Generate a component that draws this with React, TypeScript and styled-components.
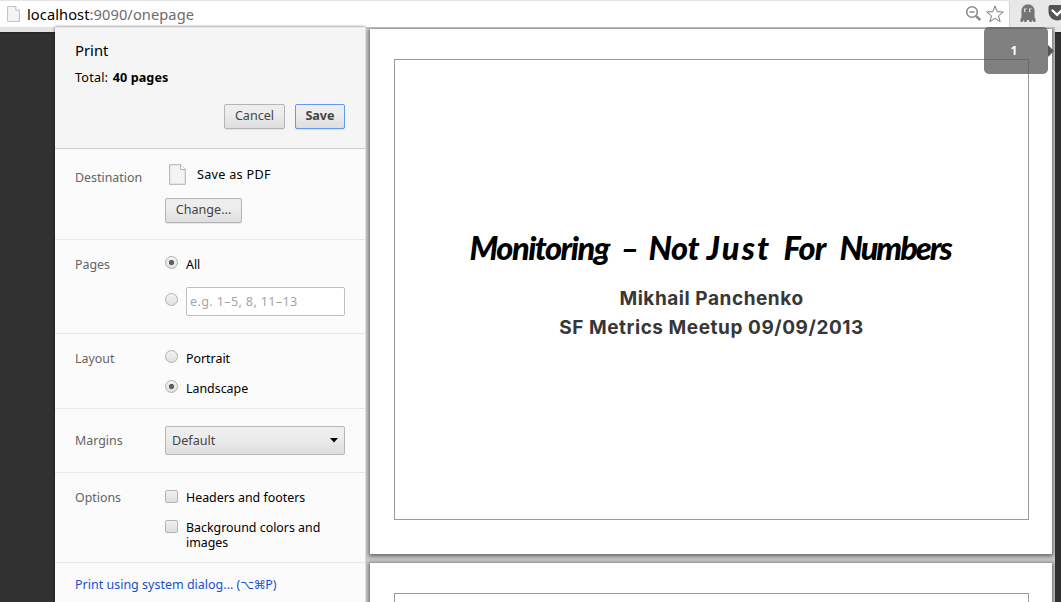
import React from "react";
import styled, { createGlobalStyle } from "styled-components";

const Global = createGlobalStyle`
  * { box-sizing: border-box; }
  body { margin: 0; overflow: hidden; background: #333; font-family: "Noto Sans", "Open Sans", sans-serif; font-size: 13px; color: #000; }
`;

const Screen = styled.div`
  width: 1061px; height: 602px; overflow: hidden; display: flex; flex-direction: column; background: #313131;
`;
const Toolbar = styled.header`
  height: 27px; flex: none; display: flex; background: #e8e8e8;
`;
const AddressBar = styled.div`
  width: 1010px; height: 27px; display: flex; align-items: center; background: #fff;
  border-top: 1px solid #e3e3e3; border-right: 1px solid #d4d4d4; border-radius: 0 2px 2px 0; padding: 0 5px 1px 7px;
`;
const Url = styled.div`
  flex: 1; margin-left: 7px; font-size: 14.6px; line-height: 22px; color: #6c6c6c; letter-spacing: 0.1px;
  span { color: #000; }
`;
const StarSlot = styled.span`display: flex; margin-left: 4px;`;
const Extensions = styled.div`
  flex: 1; display: flex; align-items: center; gap: 12px; padding: 0 0 1px 10px; overflow: hidden;
  svg { flex: none; }
`;
const Body = styled.main`
  flex: 1; display: flex; min-height: 0; position: relative;
`;
const Backdrop = styled.div<{ $w: number }>`
  width: ${p => p.$w}px; flex: none; border-top: 5px solid #e4e4e4; background: #313131;
  box-shadow: inset 0 2px 2px -1px #222;
`;
const Sidebar = styled.aside`
  width: 310px; flex: none; background: #fbfbfb; display: flex; flex-direction: column;
  box-shadow: 0 0 3px rgba(0,0,0,.6);
`;
const Summary = styled.div`
  height: 122px; flex: none; padding: 12px 20px 0; background: #f5f5f5; border-top: 1px solid #e6e6e6; border-bottom: 1px solid #cfcfcf;
`;
const Heading = styled.h1`
  margin: 0; font-size: 14.8px; font-weight: 400; line-height: 20px;
`;
const Total = styled.div`
  margin-top: 9px; font-size: 12.6px; line-height: 18px; letter-spacing: 0.2px;
  b { font-weight: 700; font-size: 12.6px; letter-spacing: 0.1px; margin-left: 1px; }
`;
const Actions = styled.div`
  display: flex; justify-content: flex-end; gap: 10px; margin-top: 17px;
`;
const Button = styled.button<{ $w: number; $primary?: boolean }>`
  width: ${p => p.$w}px; height: 25px; padding: 0 0 3px; font-family: inherit; font-size: 12.6px;
  font-weight: ${p => (p.$primary ? 700 : 400)}; color: #444;
  border: 1px solid ${p => (p.$primary ? "#5e97f5" : "#b4b4b4")}; border-radius: 2px;
  background: linear-gradient(#eeeeee, #ededed 38%, #dedede);
  box-shadow: 0 1px 0 rgba(0,0,0,.07);
`;
const Row = styled.section<{ $h: number; $top: number }>`
  height: ${p => p.$h}px; flex: none; display: flex; padding: ${p => p.$top}px 20px 0; border-bottom: 1px solid #e8e8e8;
`;
const Label = styled.div<{ $top?: number }>`
  width: 90px; flex: none; padding-top: ${p => p.$top ?? 0}px; line-height: 16px; font-size: 12.4px; color: #646464;
`;
const Controls = styled.div<{ $gap: number }>`
  flex: 1; display: flex; flex-direction: column; gap: ${p => p.$gap}px;
`;
const Destination = styled.div`
  display: flex; align-items: flex-start; height: 22px; padding-left: 4px; line-height: 21px; font-size: 12.6px; letter-spacing: 0.3px;
  span { margin-left: 11px; }
`;
const Choice = styled.label`
  display: flex; align-items: flex-start; line-height: 15px; font-size: 12.4px; gap: 8px;
`;
const Radio = styled.i<{ $on?: boolean }>`
  width: 13px; height: 13px; flex: none; margin-top: -1px; border: 1px solid #b2b2b2; border-radius: 50%;
  background: ${p => (p.$on ? "radial-gradient(circle, #606060 0 2.3px, transparent 3px)," : "")} linear-gradient(#f2f2f2, #e0e0e0);
`;
const Check = styled.i`
  width: 13px; height: 13px; flex: none; border: 1px solid #b4b4b4; border-radius: 2px;
  background: linear-gradient(#f0f0f0, #dedede);
`;
const RangeRow = styled.div`display: flex; gap: 8px; align-items: flex-start;`;
const RangeRadio = styled(Radio)`margin-top: 6px;`;
const RangeInput = styled.input`
  width: 159px; height: 29px; border: 1px solid #bfbfbf; border-radius: 2px; background: #fff; padding: 0 3px; font: 12.6px "Noto Sans", sans-serif;
  letter-spacing: 0.36px;
  &::placeholder { color: #a5a5a5; opacity: 1; }
`;
const Select = styled.div`
  width: 180px; height: 29px; display: flex; align-items: center; justify-content: space-between; padding: 0 6px;
  border: 1px solid #b8b8b8; border-radius: 2px; background: linear-gradient(#eeeeee, #ededed 38%, #dedede);
  font-size: 12.6px; color: #444;
`;
const SystemLink = styled.a`
  padding: 13px 20px; line-height: 18px; font-size: 12.5px; color: #1551cc; white-space: nowrap;
  span { font-family: "DejaVu Sans", sans-serif; font-size: 12px; letter-spacing: -0.5px; }
`;
const Preview = styled.div`
  width: 690px; flex: none; overflow: hidden; padding: 1px 3px 0 4px; display: flex; flex-direction: column; gap: 9px;
  background: #c9c9c9; border-top: 1px solid #bcbcbc; border-left: 1px solid #ddd;
`;
const Sheet = styled.article`
  width: 682px; height: 525px; flex: none; padding: 30px 24px 34px; background: #fff; box-shadow: 0 1px 4px 1px rgba(0,0,0,.52);
`;
const Slide = styled.div`
  width: 635px; height: 461px; border: 1px solid #9b9b9b; display: flex; flex-direction: column; align-items: center; padding-top: 163px;
`;
const Title = styled.h2`
  margin: 0; height: 48px; display: flex; color: #000; font: italic 900 32.5px/50px Lato, sans-serif;
`;
const Word = styled.span<{ $w: number; $sp: number }>`
  width: ${p => p.$w}px; letter-spacing: ${p => p.$sp}px; white-space: nowrap;
`;
const Author = styled.p`
  margin: 13px 0 0; font: 700 19px/29px Inter, sans-serif; color: #373737; text-align: center; letter-spacing: 0.55px;
`;
const PageBadge = styled.div`
  position: absolute; left: 984px; top: 0; width: 64px; height: 47px; border-radius: 5px; background: rgba(92,92,92,.78);
  color: #fff; font-weight: 700; font-size: 12px; line-height: 47px; padding-right: 4px; text-align: center;
  &::after { content: ""; position: absolute; left: 64px; top: 18px; border: 6px solid transparent; border-left-color: #555; border-right: 0; }
`;

const Doc = ({ w, h }: { w: number; h: number }) => (
  <svg width={w} height={h} viewBox="0 0 17 21">
    <path d="M.7.7h10.8l4.8 4.8v14.8H.7z" fill="#f4f4f4" stroke="#b0b0b0" />
    <path d="M11.5.7v4.8h4.8" fill="#fff" stroke="#b0b0b0" />
  </svg>
);

const words: [string, number, number][] = [
  ["Monitoring", 151, -1.5], ["–", 28, 0], ["Not", 58, -0.4], ["Just", 77, 2.2], ["For", 56, -0.8], ["Numbers", 114, -2],
];

export default function App() {
  return (
    <Screen>
      <Global />
      <Toolbar>
        <AddressBar>
          <Doc w={13} h={16} />
          <Url><span>localhost</span>:9090/onepage</Url>
          <svg width="17" height="17" viewBox="0 0 17 17" fill="none" stroke="#8b8b8b">
            <circle cx="7" cy="7" r="5.3" strokeWidth="1.6" />
            <path d="M4.4 7h5.2" strokeWidth="1.5" />
            <path d="M11 11l4.3 4" strokeWidth="2.4" />
          </svg>
          <StarSlot>
            <svg width="18" height="18" viewBox="0 0 18 18" fill="#fff" stroke="#7b7b7b" strokeWidth="1">
              <path d="M9 1l2.2 5.7 6.1.3-4.8 3.8 1.7 5.9L9 13.3l-5.2 3.4 1.7-5.9L.7 7l6.1-.3z" />
            </svg>
          </StarSlot>
        </AddressBar>
        <Extensions>
          <svg width="16" height="18" viewBox="0 0 16 18">
            <path d="M.5 18V15l1-2V5l2-3L6 .5h4L12.500 2l2 3v8l1 2v3h-2l-1-2-1 2H9.500l-.7-2H7.200l-.7 2H4.500l-1-2-1 2z" fill="#757575" />
            <path d="M4 4.500h3v3.500H4zM9 4.500h3v3.500H9z" fill="#dadada" />
            <path d="M5.500 5.500h1.500v2H5.500zM10.500 5.500h1.500v2h-1.500z" fill="#444" />
          </svg>
          <svg width="18" height="18" viewBox="0 0 18 18">
            <path d="M2.5 1h13Q17.5 1 17.5 3v5a8.5 8.5 0 0 1-17 0V3Q.5 1 2.5 1z" fill="#555" />
            <path d="M4.5 6.5L9 10.8l4.5-4.3" fill="none" stroke="#fff" strokeWidth="2.4" strokeLinecap="round" />
          </svg>
        </Extensions>
      </Toolbar>
      <Body>
        <Backdrop $w={55} />
        <Sidebar>
          <Summary>
            <Heading>Print</Heading>
            <Total>Total: <b>40 pages</b></Total>
            <Actions>
              <Button $w={61}>Cancel</Button>
              <Button $w={50} $primary>Save</Button>
            </Actions>
          </Summary>
          <Row $h={91} $top={15}>
            <Label $top={6}>Destination</Label>
            <Controls $gap={12}>
              <Destination><Doc w={17} h={21} /><span>Save as PDF</span></Destination>
              <Button $w={77}>Change...</Button>
            </Controls>
          </Row>
          <Row $h={94} $top={17}>
            <Label>Pages</Label>
            <Controls $gap={15}>
              <Choice><Radio $on />All</Choice>
              <RangeRow><RangeRadio /><RangeInput placeholder="e.g. 1–5, 8, 11–13" /></RangeRow>
            </Controls>
          </Row>
          <Row $h={75} $top={17}>
            <Label>Layout</Label>
            <Controls $gap={15}>
              <Choice><Radio />Portrait</Choice>
              <Choice><Radio $on />Landscape</Choice>
            </Controls>
          </Row>
          <Row $h={64} $top={17}>
            <Label $top={7}>Margins</Label>
            <Select>Default<svg width="8" height="5" viewBox="0 0 8 5"><path d="M0 0h8L4 4.6z" /></svg></Select>
          </Row>
          <Row $h={90} $top={17}>
            <Label>Options</Label>
            <Controls $gap={15}>
              <Choice><Check />Headers and footers</Choice>
              <Choice><Check />Background colors and<br />images</Choice>
            </Controls>
          </Row>
          <SystemLink>Print using system dialog... (<span>⌥⌘</span>P)</SystemLink>
        </Sidebar>
        <Preview>
          <Sheet>
            <Slide>
              <Title>{words.map(([t, w, sp]) => <Word key={t} $w={w} $sp={sp}>{t}</Word>)}</Title>
              <Author>Mikhail Panchenko<br />SF Metrics Meetup 09/09/2013</Author>
            </Slide>
          </Sheet>
          <Sheet><Slide /></Sheet>
        </Preview>
        <Backdrop $w={6} />
        <PageBadge>1</PageBadge>
      </Body>
    </Screen>
  );
}
